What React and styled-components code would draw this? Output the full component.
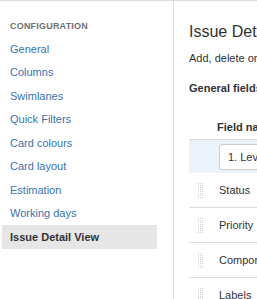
import styled, { createGlobalStyle } from 'styled-components';

const GlobalStyle = createGlobalStyle`
	html, body {
		margin: 0;
		padding: 0;
		background: #fff;
	}

	body {
		font-family: 'Liberation Sans', Arial, sans-serif;
		color: #333;
		-webkit-font-smoothing: antialiased;
	}
`;

const navItems = [
	'General',
	'Columns',
	'Swimlanes',
	'Quick Filters',
	'Card colours',
	'Card layout',
	'Estimation',
	'Working days',
	'Issue Detail View',
];

const fields = ['Status', 'Priority', 'Components', 'Labels'];

const Page = styled.div`
	width: 257px;
	height: 299px;
	overflow: hidden;
	display: flex;
	border-top: 1px solid #dcdcdc;
	box-sizing: border-box;
`;

const Sidebar = styled.nav`
	flex: 0 0 174px;
	box-sizing: border-box;
	padding: 18px 16px 0 2px;
	border-right: 1px solid #dcdcdc;
`;

const SidebarHeading = styled.h4`
	margin: 0 0 4px 0;
	padding-left: 8px;
	font-size: 9px;
	line-height: 14px;
	letter-spacing: 0.2px;
	font-weight: 700;
	color: #707070;
	text-transform: uppercase;
`;

const NavList = styled.ul`
	list-style: none;
	margin: 0;
	padding: 0;
`;

const NavItem = styled.li`
	display: flex;
	align-items: center;
	height: 23.5px;
	padding-left: 8px;
	font-size: 11px;
	font-weight: ${({ $active }) => ($active ? 700 : 400)};
	color: ${({ $active }) => ($active ? '#333' : '#3b73af')};
	background-color: ${({ $active }) => ($active ? '#e6e6e6' : 'transparent')};
	white-space: nowrap;
`;

const Main = styled.main`
	flex: 1;
	min-width: 0;
	padding: 21px 0 0 15px;
	white-space: nowrap;
`;

const Title = styled.h2`
	margin: 0 0 9px 0;
	font-size: 16px;
	line-height: 20px;
	font-weight: 400;
	color: #333;
`;

const Description = styled.p`
	margin: 0 0 16px 0;
	font-size: 11px;
	line-height: 14px;
`;

const SectionTitle = styled.h3`
	margin: 0 0 20px 0;
	font-size: 11px;
	line-height: 14px;
	font-weight: 700;
`;

const Table = styled.div`
	width: 400px;
	font-size: 11px;
`;

const HeaderRow = styled.div`
	display: flex;
	align-items: center;
	height: 24px;
	padding-left: 28px;
	font-weight: 700;
	border-bottom: 1px solid #dcdcdc;
`;

const AddRow = styled.div`
	display: flex;
	align-items: center;
	height: 33px;
	padding-left: 30px;
	background-color: #ebf2f9;
`;

const Select = styled.div`
	display: flex;
	align-items: center;
	height: 26px;
	width: 150px;
	box-sizing: border-box;
	padding-left: 8px;
	background: #fff;
	border: 1px solid #ccc;
	border-radius: 3px;
	font-size: 11px;
`;

const FieldRow = styled.div`
	display: flex;
	align-items: center;
	height: 34px;
	border-bottom: 1px solid #dcdcdc;
`;

const DragCell = styled.div`
	flex: 0 0 30px;
	box-sizing: border-box;
	padding-left: 8px;
`;

const Handle = styled.span`
	display: block;
	width: 6px;
	height: 16px;
	background-image:
		linear-gradient(90deg, #fff 1px, transparent 1px),
		linear-gradient(#fff 1px, #d2d2d2 1px);
	background-size: 2px 2px;
`;

export default function App() {
	return (
		<>
			<GlobalStyle />
			<Page>
				<Sidebar>
					<SidebarHeading>Configuration</SidebarHeading>
					<NavList>
						{navItems.map((item) => (
							<NavItem key={item} $active={item === 'Issue Detail View'}>
								{item}
							</NavItem>
						))}
					</NavList>
				</Sidebar>
				<Main>
					<Title>Issue Detail View</Title>
					<Description>Add, delete or reorder the fields shown</Description>
					<SectionTitle>General fields</SectionTitle>
					<Table>
						<HeaderRow>Field name</HeaderRow>
						<AddRow>
							<Select>1. Level</Select>
						</AddRow>
						{fields.map((field) => (
							<FieldRow key={field}>
								<DragCell>
									<Handle />
								</DragCell>
								{field}
							</FieldRow>
						))}
					</Table>
				</Main>
			</Page>
		</>
	);
}
